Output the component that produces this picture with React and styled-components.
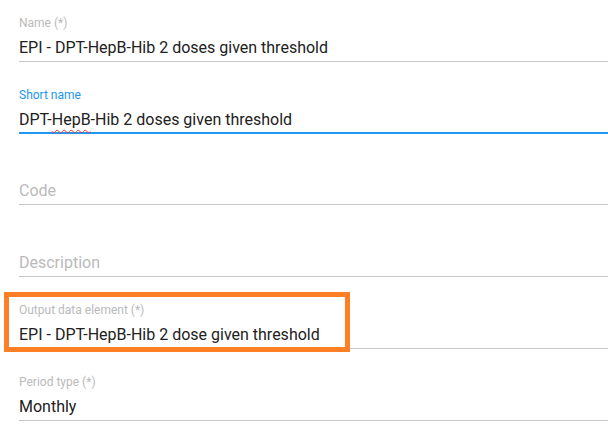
import React from "react";
import styled, { createGlobalStyle } from "styled-components";

const Global = createGlobalStyle`
  html, body { margin: 0; padding: 0; background: #ffffff; }
  body { font-family: Roboto, "Noto Sans", Arial, sans-serif; }
`;

const Page = styled.div`
  width: 608px;
  height: 430px;
  overflow: hidden;
  padding-left: 19px;
  box-sizing: border-box;
  display: flex;
  flex-direction: column;
  gap: 10px;
`;

const Field = styled.div`
  position: relative;
  height: 62px;
  box-sizing: border-box;
  padding-top: 15px;
  display: flex;
  flex-direction: column;
  border-bottom: ${(p) => (p.$focused ? "2px solid #2196f3" : "1px solid #c6c6c6")};
  margin-bottom: ${(p) => (p.$focused ? "-1px" : "0")};
`;

const Label = styled.div`
  font-size: 12px;
  line-height: 16px;
  height: 16px;
  color: ${(p) => (p.$focused ? "#2196f3" : "#bababa")};
`;

const Value = styled.div`
  margin-top: 5px;
  font-size: 16px;
  line-height: 24px;
  color: ${(p) => (p.$placeholder ? "#bababa" : "#212121")};
  white-space: nowrap;
`;

const Misspelled = styled.span`
  text-decoration: underline wavy #e53935;
  text-decoration-thickness: 1px;
  text-underline-offset: 4px;
`;

const Highlight = styled.div`
  position: absolute;
  left: -15px;
  top: 5px;
  width: 346px;
  height: 60px;
  border: 5px solid #ff7f27;
  box-sizing: border-box;
  pointer-events: none;
`;

export default function App() {
  return (
    <>
      <Global />
      <Page>
        <Field>
          <Label>Name (*)</Label>
          <Value>EPI - DPT-HepB-Hib 2 doses given threshold</Value>
        </Field>
        <Field $focused>
          <Label $focused>Short name</Label>
          <Value>
            DPT-<Misspelled>HepB</Misspelled>-Hib 2 doses given threshold
          </Value>
        </Field>
        <Field>
          <Label />
          <Value $placeholder>Code</Value>
        </Field>
        <Field>
          <Label />
          <Value $placeholder>Description</Value>
        </Field>
        <Field>
          <Label>Output data element (*)</Label>
          <Value>EPI - DPT-HepB-Hib 2 dose given threshold</Value>
          <Highlight />
        </Field>
        <Field>
          <Label>Period type (*)</Label>
          <Value>Monthly</Value>
        </Field>
      </Page>
    </>
  );
}
